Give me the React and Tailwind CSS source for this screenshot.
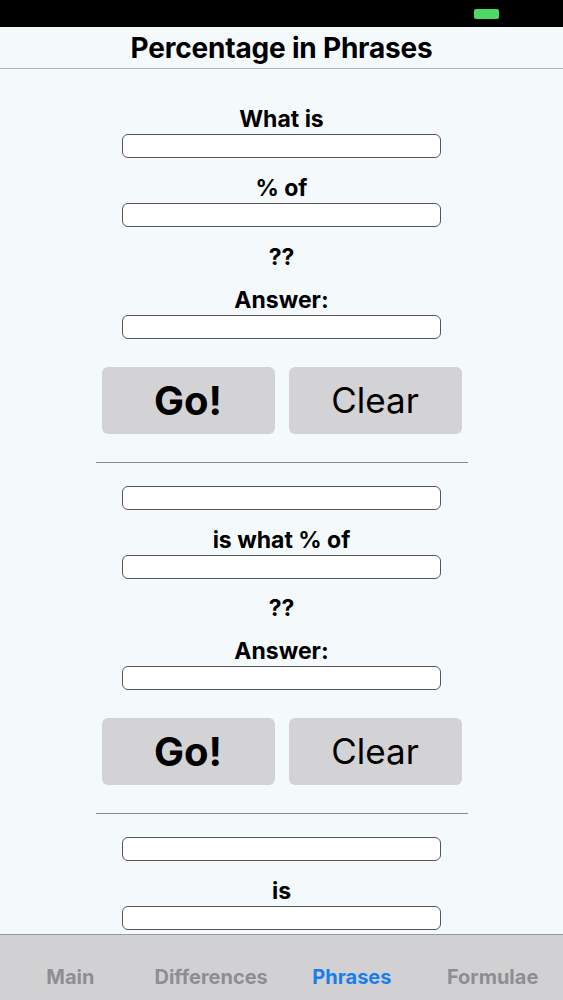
import React from "react";

const font = { fontFamily: "Inter, 'Liberation Sans', sans-serif" };

function Label({ children }) {
  return (
    <div className="h-6 flex items-center justify-center text-[23px] font-bold leading-6 text-black">
      {children}
    </div>
  );
}

function Field() {
  return <div className="mx-auto w-[319px] h-6 rounded-[6px] border border-[#555] bg-white" />;
}

function Buttons() {
  return (
    <div className="flex justify-center gap-[14px]">
      <button className="w-[173px] h-[67px] rounded-[6px] bg-[#d3d3d6] text-[40px] font-bold text-black">Go!</button>
      <button className="w-[173px] h-[67px] rounded-[6px] bg-[#d3d3d6] text-[35px] font-normal text-black">Clear</button>
    </div>
  );
}

function Divider() {
  return <div className="mx-auto w-[372px] h-px bg-[#8a8a8a]" />;
}

export default function App() {
  return (
    <div style={font} className="w-[563px] h-[1000px] flex flex-col overflow-hidden bg-[#f4f9fb]">
      <div className="h-[27px] bg-black flex items-center justify-end pr-[64px] shrink-0">
        <div className="w-[25px] h-[10px] rounded-[2px] bg-[#4cd964]" />
      </div>
      <div className="h-[42px] shrink-0 flex items-center justify-center border-b border-[#b5b5b5]">
        <span className="text-[28px] font-bold text-black tracking-[-0.2px]">Percentage in Phrases</span>
      </div>
      <div className="flex-1 overflow-hidden flex flex-col pt-[38px]">
        <Label>What is</Label>
        <div className="mt-[3px]"><Field /></div>
        <div className="mt-[18px]"><Label>% of</Label></div>
        <div className="mt-[3px]"><Field /></div>
        <div className="mt-[18px]"><Label>??</Label></div>
        <div className="mt-[19px]"><Label>Answer:</Label></div>
        <div className="mt-[3px]"><Field /></div>
        <div className="mt-[28px]"><Buttons /></div>
        <div className="mt-[28px]"><Divider /></div>
        <div className="mt-[23px]"><Field /></div>
        <div className="mt-[18px]"><Label>is what % of</Label></div>
        <div className="mt-[3px]"><Field /></div>
        <div className="mt-[17px]"><Label>??</Label></div>
        <div className="mt-[19px]"><Label>Answer:</Label></div>
        <div className="mt-[3px]"><Field /></div>
        <div className="mt-[28px]"><Buttons /></div>
        <div className="mt-[28px]"><Divider /></div>
        <div className="mt-[23px]"><Field /></div>
        <div className="mt-[18px]"><Label>is</Label></div>
        <div className="mt-[3px]"><Field /></div>
      </div>
      <div className="h-[66px] shrink-0 bg-[#d1d1d4] border-t border-[#9a9a9a] grid grid-cols-4 items-center pt-[18px]">
        <div className="text-center text-[20px] font-bold text-[#8e8e92]">Main</div>
        <div className="text-center text-[20px] font-bold text-[#8e8e92]">Differences</div>
        <div className="text-center text-[20px] font-bold text-[#1a7de9]">Phrases</div>
        <div className="text-center text-[20px] font-bold text-[#8e8e92]">Formulae</div>
      </div>
    </div>
  );
}
